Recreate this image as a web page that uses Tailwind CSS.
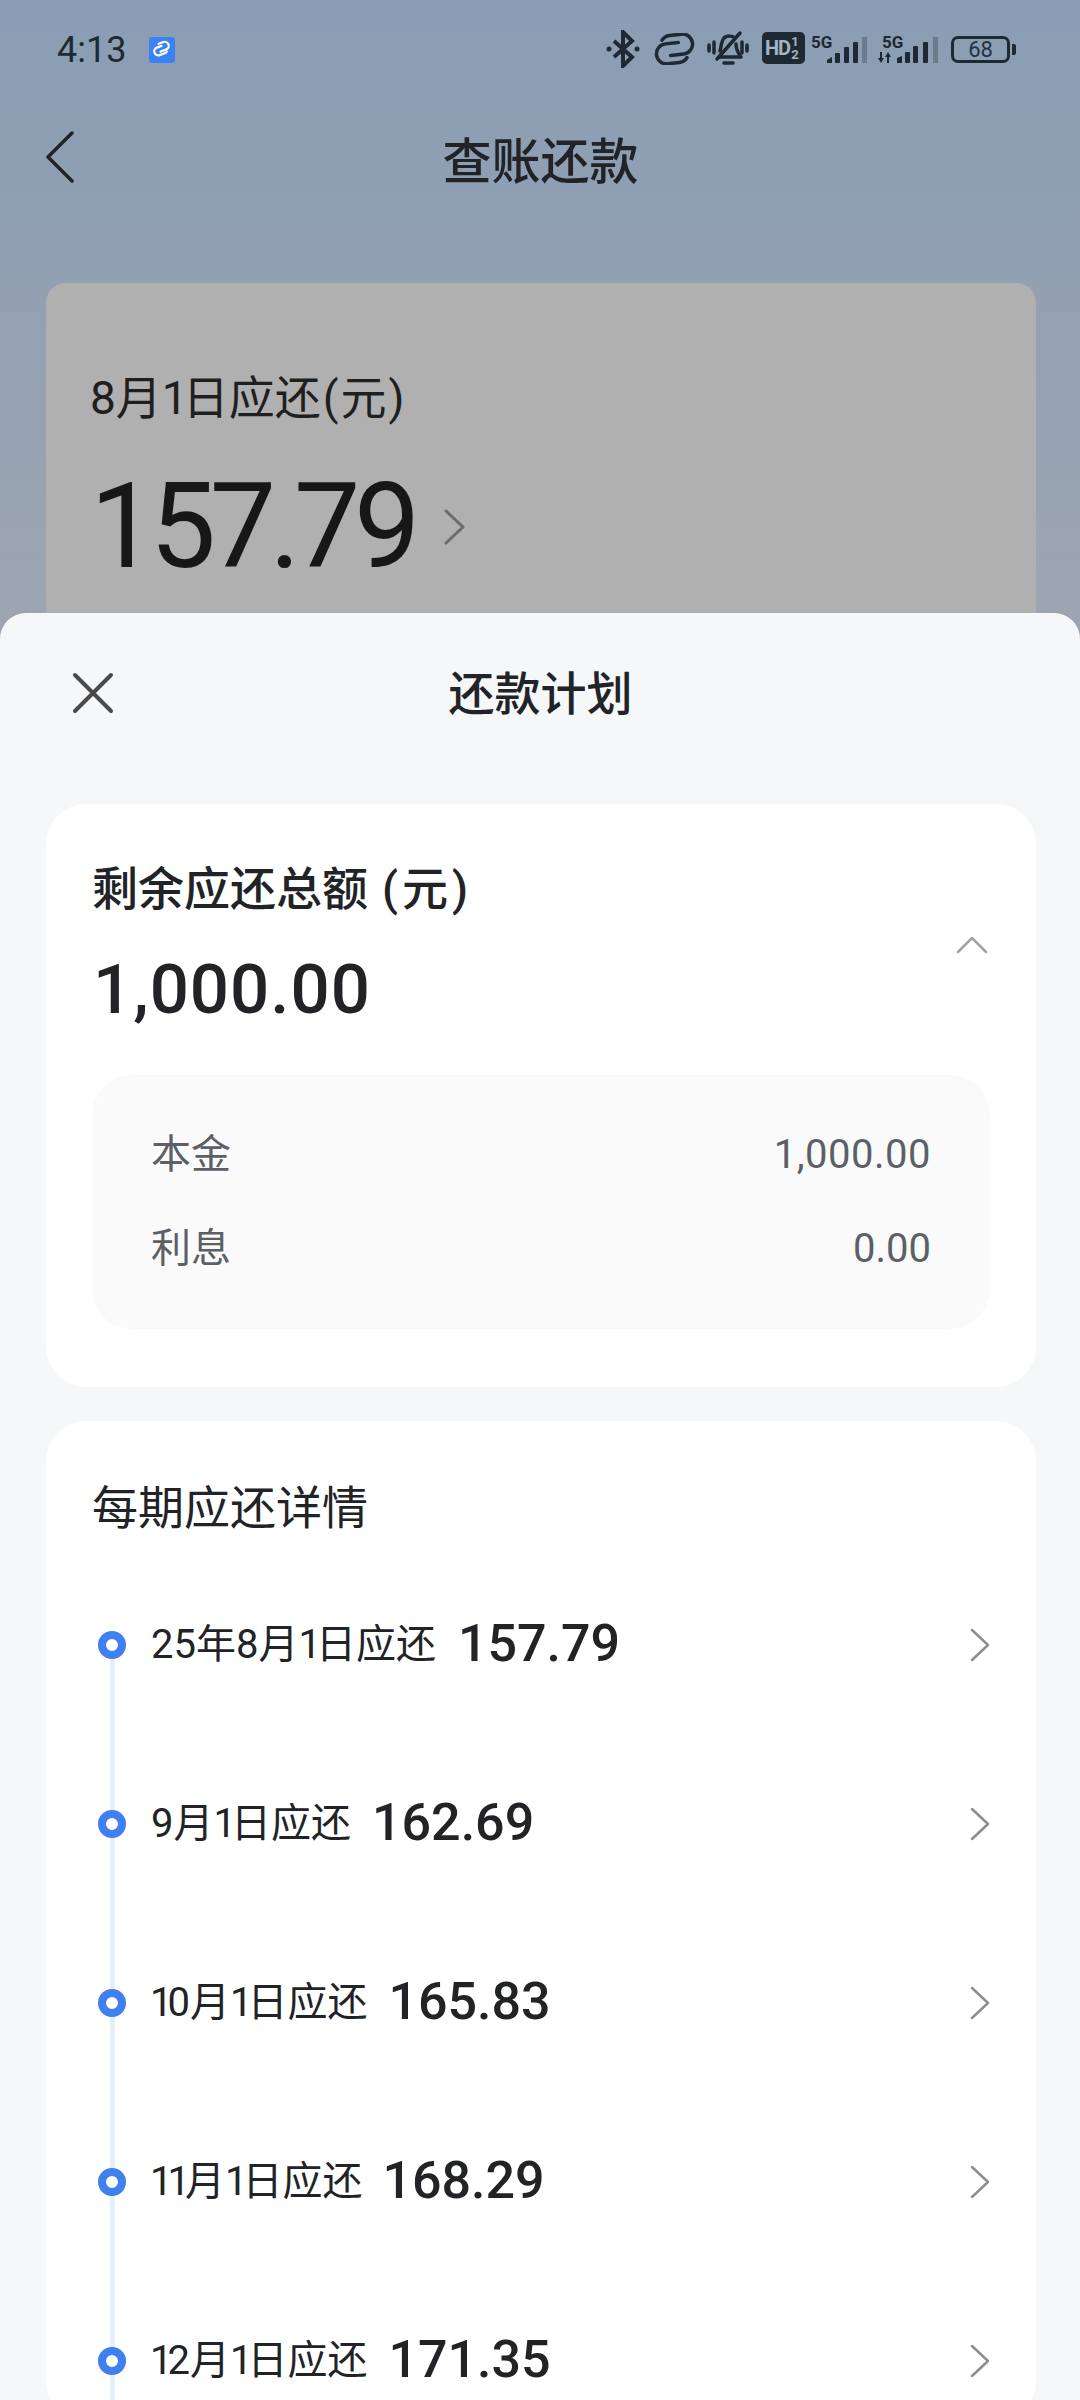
<!DOCTYPE html>
<html lang="zh-CN">
<head>
    <meta charset="UTF-8">
    <meta name="viewport" content="width=device-width, initial-scale=1.0">
    <title>查账还款</title>
    <script src="https://cdn.jsdelivr.net/npm/@tailwindcss/browser@4"></script>
</head>
<body class="m-0">
<div class="relative w-[1080px] h-[2400px] overflow-hidden bg-[linear-gradient(to_bottom,#8a9db4,#9ca5b1_620px)] text-[#222326] font-['Roboto','Noto_Sans_CJK_SC',sans-serif]">

    <!-- status bar -->
    <div class="flex items-center h-[100px] pl-[57px] text-[#1f2933]">
        <span class="text-[36px] leading-none w-[92px]">4:13</span>
        <span class="flex items-center justify-center w-[26px] h-[26px] rounded-[3px] bg-[#3b82f6]">
            <svg width="20" height="18" viewBox="0 0 20 18" fill="none" stroke="#fff" stroke-width="2.200" stroke-linecap="round" transform="rotate(-20)"><path d="M11 5H6a4 4 0 0 0 0 8h6a4 4 0 0 0 2-1"/><path d="M8 10h6a4 4 0 0 0 0-8H9"/></svg>
        </span>
        <div class="ml-auto flex items-center h-[40px] relative w-[412px] mr-[62px]">
            <!-- bluetooth -->
            <svg class="absolute left-0 top-0" width="34" height="38" viewBox="0 0 34 38" fill="none" stroke="#1f2933" stroke-width="4"><path d="M8 11l18 16-9 9V2l9 9L8 27"/><circle cx="3" cy="19" r="2.500" fill="#1f2933" stroke="none"/><circle cx="31" cy="19" r="2.500" fill="#1f2933" stroke="none"/></svg>
            <!-- link -->
            <svg class="absolute left-[48px] top-[3px]" width="41" height="32" viewBox="0 0 41 32" fill="none" stroke="#1f2933" stroke-width="3.500" stroke-linecap="round"><g transform="rotate(-6 20 16)"><path d="M25 10H12a10 10 0 0 0 0 20h12a10 10 0 0 0 8-4"/><path d="M16 22h13a10 10 0 0 0 0-20H17a10 10 0 0 0-8 4"/></g></svg>
            <!-- muted bell -->
            <svg class="absolute left-[101px] top-0" width="42" height="37" viewBox="0 0 42 37" fill="none" stroke="#1f2933" stroke-width="3.500" stroke-linecap="round" stroke-linejoin="round"><path d="M13 21c1-3 1-6 2-9 1-4 4-6 7-6 2 0 4 0 6 2"/><path d="M29 14c0 5 2 9 5 13H13"/><path d="M10 29L33 3"/><path d="M17 33h9"/><path d="M2 15v6M7 12v11M35 12v11M40 15v6"/></svg>
            <!-- HD badge -->
            <div class="absolute left-[156px] top-[2px] flex items-center w-[43px] h-[32px] rounded-[5px] bg-[#1f2933] text-[#a5b3c4] font-bold pl-[3px]">
                <span class="text-[20px] leading-none tracking-[-1px]">HD</span>
                <span class="flex flex-col text-[13px] leading-[13px] ml-[1px]"><span>1</span><span>2</span></span>
            </div>
            <!-- 5G signal 1 -->
            <span class="absolute left-[205px] top-[4px] text-[17px] leading-none font-bold">5G</span>
            <svg class="absolute left-[221px] top-[7px]" width="40" height="26" viewBox="0 0 40 26" fill="#1f2933"><path d="M0 26v-3l5-3v6z"/><rect x="8" y="16" width="5" height="10" rx="1"/><rect x="17" y="10" width="5" height="16" rx="1"/><rect x="26" y="5" width="5" height="21" rx="1"/><rect x="35" y="0" width="5" height="26" fill="#6c7b8c"/></svg>
            <!-- 5G signal 2 -->
            <span class="absolute left-[276px] top-[4px] text-[17px] leading-none font-bold">5G</span>
            <svg class="absolute left-[272px] top-[7px]" width="60" height="26" viewBox="0 0 60 26" fill="#1f2933"><path d="M2 15h2v6h2l-3 5-3-5h2zM9 26h2v-6h2l-3-5-3 5h2zM19 26v-5l5-2v7z"/><rect x="27" y="15" width="5" height="11" rx="1"/><rect x="35" y="9" width="5" height="17" rx="1"/><rect x="45" y="5" width="5" height="21" rx="1"/><rect x="55" y="0" width="5" height="26" fill="#6c7b8c"/></svg>
            <!-- battery -->
            <div class="absolute left-[345px] top-[6px] flex items-center justify-center w-[59px] h-[27px] rounded-[7px] border-[3px] border-[#1f2933] text-[22px] leading-none text-[#243240]">68</div>
            <div class="absolute left-[406px] top-[14px] w-[4px] h-[11px] rounded-r-[2px] bg-[#1f2933]"></div>
        </div>
    </div>

    <!-- page header -->
    <div class="relative flex items-center justify-center h-[124px]">
        <svg class="absolute left-[45px] top-[31px]" width="30" height="52" viewBox="0 0 30 52" fill="none" stroke="#202328" stroke-width="3.500" stroke-linecap="round" stroke-linejoin="round"><path d="M27 2L3 26l24 24"/></svg>
        <span class="text-[49px] leading-none font-medium ml-[1px]">查账还款</span>
    </div>

    <!-- card behind the sheet -->
    <div class="mt-[59px] ml-[46px] mr-[44px] h-[420px] rounded-t-[20px] bg-[#b0b0b0] pl-[45px] pt-[90px]">
        <div class="text-[46px] leading-[50px] text-[#1f1f1f] -ml-[1px]">8月<span class="tracking-[-5px]">1</span>日应还<span class="mx-[2px]">(</span>元<span class="mx-[2px]">)</span></div>
        <div class="flex items-center mt-[44px]">
            <span class="text-[118px] leading-[120px] text-[#171717] tracking-[-6.500px] -ml-[1px]">157.79</span>
            <svg class="ml-[30px]" width="22" height="36" viewBox="0 0 22 36" fill="none" stroke="#6b6b6b" stroke-width="3" stroke-linecap="round" stroke-linejoin="round"><path d="M2 2l17 16L2 34"/></svg>
        </div>
    </div>

    <!-- bottom sheet -->
    <div class="absolute left-0 right-0 top-[613px] bottom-0 rounded-t-[26px] bg-[#f5f7f9]">
        <div class="relative flex items-center justify-center h-[165px]">
            <svg class="absolute left-[72px] top-[59px]" width="42" height="42" viewBox="0 0 42 42" stroke="#4a4a4a" stroke-width="4" stroke-linecap="round"><path d="M3 3l36 36M39 3L3 39"/></svg>
            <span class="text-[46px] leading-none font-medium -mt-[4px] ml-[1px]">还款计划</span>
        </div>

        <!-- total card -->
        <div class="relative mt-[26px] ml-[46px] mr-[44px] h-[583px] rounded-[40px] bg-white px-[47px] pt-[60px]">
            <div class="text-[46px] leading-[50px] font-medium -ml-[1px]">剩余应还总额<span class="ml-[14px] mr-[4px]">(</span>元<span class="ml-[4px]">)</span></div>
            <div class="text-[69px] leading-[70px] font-medium mt-[41px] tracking-[1px]">1,000.00</div>
            <svg class="absolute right-[48px] top-[132px]" width="32" height="18" viewBox="0 0 32 18" fill="none" stroke="#a3a3a3" stroke-width="2.500" stroke-linecap="round" stroke-linejoin="round"><path d="M2 16L16 2l14 14"/></svg>
            <div class="flex flex-col justify-center gap-[40px] mt-[50px] -mx-[1px] h-[254px] rounded-[40px] bg-[#fafafb] pl-[59px] pr-[59px] text-[40px] leading-[54px] text-[#5c5f66]">
                <div class="flex justify-between"><span>本金</span><span class="tracking-[0.500px]">1,000.00</span></div>
                <div class="flex justify-between"><span>利息</span><span>0.00</span></div>
            </div>
        </div>

        <!-- instalment list -->
        <div class="relative mt-[34px] ml-[46px] mr-[44px] h-[1000px] rounded-[40px] bg-white pl-[47px] pr-[47px] pt-[57px] overflow-hidden">
            <div class="text-[46px] leading-[60px] -ml-[1px]">每期应还详情</div>
            <div class="relative mt-[17px]">
                <div class="absolute left-[17px] top-[90px] w-[5px] h-[900px] bg-[#e6effb]"></div>

                <div class="relative flex items-center h-[179px]">
                    <span class="ml-[5px] w-[28px] h-[28px] rounded-full border-[8px] border-[#3f7ff0] bg-white"></span>
                    <span class="ml-[25px] text-[40px] leading-none">25年8月<span class="tracking-[-5px]">1</span>日应还</span>
                    <span class="ml-[22px] text-[52px] leading-none font-medium -mt-[2px]">157.79</span>
                    <svg class="ml-auto -mr-[2px]" width="22" height="34" viewBox="0 0 22 34" fill="none" stroke="#8e8e8e" stroke-width="2.500" stroke-linecap="round" stroke-linejoin="round"><path d="M3 2l16 15L3 32"/></svg>
                </div>
                <div class="relative flex items-center h-[179px]">
                    <span class="ml-[5px] w-[28px] h-[28px] rounded-full border-[8px] border-[#3f7ff0] bg-white"></span>
                    <span class="ml-[25px] text-[40px] leading-none">9月<span class="tracking-[-5px]">1</span>日应还</span>
                    <span class="ml-[21px] text-[52px] leading-none font-medium -mt-[2px]">162.69</span>
                    <svg class="ml-auto -mr-[2px]" width="22" height="34" viewBox="0 0 22 34" fill="none" stroke="#8e8e8e" stroke-width="2.500" stroke-linecap="round" stroke-linejoin="round"><path d="M3 2l16 15L3 32"/></svg>
                </div>
                <div class="relative flex items-center h-[179px]">
                    <span class="ml-[5px] w-[28px] h-[28px] rounded-full border-[8px] border-[#3f7ff0] bg-white"></span>
                    <span class="ml-[24px] text-[40px] leading-none"><span class="tracking-[-5px]">1</span>0月<span class="tracking-[-5px]">1</span>日应还</span>
                    <span class="ml-[21px] text-[52px] leading-none font-medium -mt-[2px]">165.83</span>
                    <svg class="ml-auto -mr-[2px]" width="22" height="34" viewBox="0 0 22 34" fill="none" stroke="#8e8e8e" stroke-width="2.500" stroke-linecap="round" stroke-linejoin="round"><path d="M3 2l16 15L3 32"/></svg>
                </div>
                <div class="relative flex items-center h-[179px]">
                    <span class="ml-[5px] w-[28px] h-[28px] rounded-full border-[8px] border-[#3f7ff0] bg-white"></span>
                    <span class="ml-[24px] text-[40px] leading-none"><span class="tracking-[-5px]">11</span>月<span class="tracking-[-5px]">1</span>日应还</span>
                    <span class="ml-[20px] text-[52px] leading-none font-medium -mt-[2px]">168.29</span>
                    <svg class="ml-auto -mr-[2px]" width="22" height="34" viewBox="0 0 22 34" fill="none" stroke="#8e8e8e" stroke-width="2.500" stroke-linecap="round" stroke-linejoin="round"><path d="M3 2l16 15L3 32"/></svg>
                </div>
                <div class="relative flex items-center h-[179px]">
                    <span class="ml-[5px] w-[28px] h-[28px] rounded-full border-[8px] border-[#3f7ff0] bg-white"></span>
                    <span class="ml-[24px] text-[40px] leading-none"><span class="tracking-[-5px]">1</span>2月<span class="tracking-[-5px]">1</span>日应还</span>
                    <span class="ml-[21px] text-[52px] leading-none font-medium -mt-[2px]">171.35</span>
                    <svg class="ml-auto -mr-[2px]" width="22" height="34" viewBox="0 0 22 34" fill="none" stroke="#8e8e8e" stroke-width="2.500" stroke-linecap="round" stroke-linejoin="round"><path d="M3 2l16 15L3 32"/></svg>
                </div>
            </div>
        </div>
    </div>
</div>
</body>
</html>
